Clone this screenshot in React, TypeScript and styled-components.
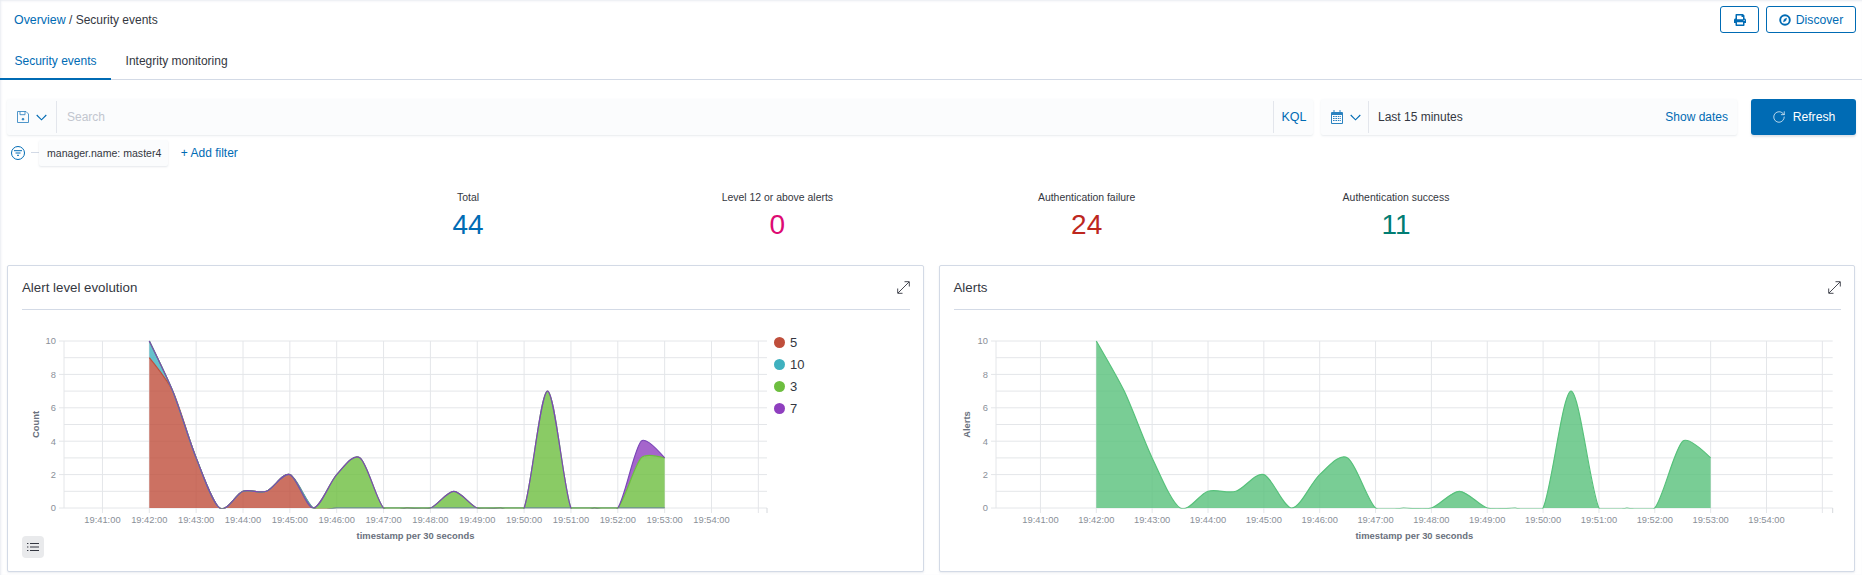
import React from 'react';
import styled, { createGlobalStyle } from 'styled-components';
import { FaPrint } from 'react-icons/fa';
import { RotateCw } from 'lucide-react';

const GlobalStyle = createGlobalStyle`
  html, body {
    margin: 0;
    padding: 0;
    background: #fff;
    font-family: "Liberation Sans", Arial, sans-serif;
    color: #343741;
  }
`;

const Page = styled.div`
  width: 1862px;
  height: 575px;
  overflow: hidden;
  box-sizing: border-box;
  display: flex;
  flex-direction: column;
  box-shadow: inset 1px 1px 2px rgba(211, 218, 230, 0.5);
`;

const TopBar = styled.div`
  height: 40px;
  box-sizing: border-box;
  padding: 6px 6px 0 14px;
  display: flex;
  justify-content: space-between;
  align-items: flex-start;
`;

const Breadcrumb = styled.div`
  font-size: 12px;
  line-height: 14px;
  margin-top: 7px;
  a {
    color: #006bb4;
    font-size: 12.4px;
  }
`;

const ButtonRow = styled.div`
  display: flex;
  gap: 7px;
`;

const OutlineButton = styled.div<{ $width: number }>`
  width: ${(p) => p.$width}px;
  height: 27px;
  box-sizing: border-box;
  border: 1px solid #006bb4;
  border-radius: 3px;
  color: #006bb4;
  font-size: 12.2px;
  display: flex;
  align-items: center;
  justify-content: center;
  gap: 5px;
`;

const Tabs = styled.div`
  height: 40px;
  box-sizing: border-box;
  display: flex;
  border-bottom: 1px solid #d3dae6;
`;

const Tab = styled.div<{ $active?: boolean }>`
  height: 40px;
  box-sizing: border-box;
  padding: 0 14.5px;
  font-size: 12px;
  line-height: 42px;
  color: ${(p) => (p.$active ? '#006bb4' : '#343741')};
  border-bottom: 2px solid ${(p) => (p.$active ? '#006bb4' : 'transparent')};
`;

const QueryRow = styled.div`
  margin-top: 19px;
  padding: 0 6px 0 7px;
  height: 36px;
  display: flex;
`;

const Field = styled.div<{ $width: number }>`
  width: ${(p) => p.$width}px;
  height: 36px;
  box-sizing: border-box;
  background: #fbfcfd;
  box-shadow: 0 1px 2px rgba(152, 162, 179, 0.22);
  border-radius: 2px;
  display: flex;
  align-items: center;
  font-size: 12px;

  & + & {
    margin-left: 8px;
  }
`;

const IconSlot = styled.div<{ $width: number; $inset: number }>`
  width: ${(p) => p.$width}px;
  height: 32px;
  flex: none;
  box-sizing: border-box;
  padding-left: ${(p) => p.$inset}px;
  border-right: 1px solid #e3e6ec;
  display: flex;
  align-items: center;
  justify-content: center;
  gap: 7px;
`;

const SearchInput = styled.input`
  flex: 1;
  border: 0;
  outline: 0;
  background: transparent;
  padding: 0 10px;
  font: inherit;
  &::placeholder {
    color: #c2c6cf;
    opacity: 1;
  }
`;

const Kql = styled.div`
  width: 40px;
  height: 32px;
  box-sizing: border-box;
  border-left: 1px solid #e3e6ec;
  color: #006bb4;
  font-size: 12.5px;
  line-height: 32px;
  padding-left: 7.5px;
`;

const RangeText = styled.div`
  flex: 1;
  padding-left: 9px;
`;

const ShowDates = styled.div`
  color: #006bb4;
  padding-right: 9px;
`;

const RefreshButton = styled.div`
  width: 105px;
  height: 36px;
  margin-left: 14px;
  background: #006bb4;
  color: #fff;
  border-radius: 3px;
  box-shadow: 0 2px 2px rgba(152, 162, 179, 0.3);
  font-size: 12.2px;
  display: flex;
  align-items: center;
  justify-content: center;
  gap: 7px;
`;

const FilterRow = styled.div`
  margin-top: 5px;
  padding-left: 11px;
  height: 26px;
  display: flex;
  align-items: center;
`;

const FilterDash = styled.div`
  width: 8px;
  height: 1px;
  margin: 0 0 2px 6px;
  background: #d3dae6;
`;

const FilterPill = styled.div`
  height: 26px;
  box-sizing: border-box;
  padding: 0 7px 0 8px;
  line-height: 26px;
  font-size: 10.55px;
  background: #fbfcfd;
  border-radius: 2px;
  box-shadow: 0 1px 2px rgba(152, 162, 179, 0.25);
`;

const AddFilter = styled.div`
  margin-left: 12.5px;
  color: #006bb4;
  font-size: 12px;
`;

const Stats = styled.div`
  margin-top: 25px;
  padding-left: 4px;
  width: 1860px;
  box-sizing: border-box;
  display: grid;
  grid-template-columns: repeat(6, 1fr);
  height: 74px;
`;

const Stat = styled.div`
  text-align: center;
  &:first-child {
    grid-column-start: 2;
  }
`;

const StatLabel = styled.div`
  font-size: 10.45px;
  line-height: 14px;
`;

const StatValue = styled.div<{ $color: string }>`
  color: ${(p) => p.$color};
  font-size: 28px;
  line-height: 32px;
  margin-top: 4px;
`;

const Panels = styled.div`
  padding: 0 7px;
  display: flex;
  gap: 15px;
`;

const Panel = styled.div`
  position: relative;
  flex: 1;
  height: 307px;
  box-sizing: border-box;
  background: #fff;
  border: 1px solid #d3dae6;
  border-radius: 2px;
  box-shadow: 0 1px 2px rgba(152, 162, 179, 0.2);
`;

const PanelHeader = styled.div`
  height: 44px;
  box-sizing: border-box;
  margin: 0 13px 0 14px;
  border-bottom: 1px solid #d3dae6;
  display: flex;
  justify-content: space-between;
  align-items: center;
  font-size: 13.3px;
`;

const PanelBody = styled.div`
  display: flex;
`;

const ChartSvg = styled.svg`
  flex: none;
`;

const Legend = styled.div`
  padding: 21.5px 0 0 1px;
`;

const LegendItem = styled.div`
  height: 22px;
  display: flex;
  align-items: center;
  gap: 5px;
  font-size: 13px;
`;

const LegendDot = styled.span<{ $color: string }>`
  width: 11px;
  height: 11px;
  flex: none;
  border-radius: 50%;
  background: ${(p) => p.$color};
`;

const LegendToggle = styled.div`
  position: absolute;
  left: 14px;
  bottom: 13px;
  width: 22px;
  height: 22px;
  border-radius: 4px;
  background: #e9eaec;
  display: flex;
  align-items: center;
  justify-content: center;
`;

const TickLabel = styled.text`
  font-size: 9.33px;
  fill: #8a8f98;
`;

const AxisTitle = styled.text`
  font-size: 9.4px;
  font-weight: 700;
  fill: #6a717d;
  text-anchor: middle;
`;

const ChevronIcon = () => (
  <svg width="11" height="7" viewBox="0 0 11 7" fill="none" stroke="#006bb4" strokeWidth="1.1">
    <path d="M.7 1 5.5 5.8 10.3 1" />
  </svg>
);

const SaveIcon = () => (
  <svg width="12" height="12" viewBox="0 0 12 12" fill="none" stroke="#3b8ac4" strokeWidth=".9">
    <path d="M.5.5h8.5l2.5 2.5v8.5H.5z" />
    <path d="M3 .5v3.2h5V.5" />
    <circle cx="6" cy="8.2" r=".9" fill="#006bb4" />
  </svg>
);

const CalendarIcon = () => (
  <svg width="12" height="14" viewBox="0 0 12 14" fill="none" stroke="#2a82c0">
    <path d="M.5 2.5h11v11H.5z" />
    <path d="M.5 4h11" strokeWidth="2" />
    <path d="M3 0v2.5M9 0v2.5" />
    <path d="M2 6.5h8M2 8.5h8M2 10.5h8" strokeWidth="1.2" strokeDasharray="1.6 .8" />
  </svg>
);

const FilterIcon = () => (
  <svg width="14" height="14" viewBox="0 0 14 14" fill="none" stroke="#006bb4">
    <circle cx="7" cy="7" r="6.5" />
    <path d="M3 4.7h8M4.5 7h5M6 9.3h2" />
  </svg>
);

const DiscoverIcon = () => (
  <svg width="12" height="12" viewBox="0 0 12 12" fill="none" stroke="#006bb4">
    <circle cx="6" cy="6" r="4.8" strokeWidth="1.9" />
    <path d="M7.6 4.2 6.7 6.8 4.5 7.8 5.3 5.2z" fill="#006bb4" strokeWidth=".6" />
  </svg>
);

const ExpandIcon = () => (
  <svg width="13" height="13" viewBox="0 0 13 13" fill="none" stroke="#343741" strokeWidth=".9">
    <path d="M1 12 12 1M7.5.7h4.8v4.8M.7 7.5v4.8h4.8" />
  </svg>
);

const ListIcon = () => (
  <svg width="12" height="10" viewBox="0 0 12 10" fill="none" stroke="#343741">
    <path d="M3 1.5h9M3 5h9M3 8.5h9" />
    <path d="M0 1.5h1.4M0 5h1.4M0 8.5h1.4" />
  </svg>
);

type Point = [number, number];

// same interpolation as d3 v3 "cardinal" with its default tension
const cardinalSegments = (pts: Point[]) => {
  const t: Point[] = [];
  for (let i = 1; i < pts.length - 1; i++) {
    t.push([0.15 * (pts[i + 1][0] - pts[i - 1][0]), 0.15 * (pts[i + 1][1] - pts[i - 1][1])]);
  }
  const last = pts.length - 1;
  let d = `Q${pts[1][0] - (t[0][0] * 2) / 3},${pts[1][1] - (t[0][1] * 2) / 3},${pts[1][0]},${pts[1][1]}`;
  for (let i = 1; i < last - 1; i++) {
    d += `C${pts[i][0] + t[i - 1][0]},${pts[i][1] + t[i - 1][1]},${pts[i + 1][0] - t[i][0]},${pts[i + 1][1] - t[i][1]},${pts[i + 1][0]},${pts[i + 1][1]}`;
  }
  const tl = t[t.length - 1];
  d += `Q${pts[last - 1][0] + (tl[0] * 2) / 3},${pts[last - 1][1] + (tl[1] * 2) / 3},${pts[last][0]},${pts[last][1]}`;
  return d;
};

const Y_TOP = 341;
const Y_ZERO = 508;
const MINUTES = ['41', '42', '43', '44', '45', '46', '47', '48', '49', '50', '51', '52', '53', '54'];

interface Series {
  color: string;
  stroke?: string;
  values: number[];
}

interface ChartProps {
  id: string;
  originX: number;
  width: number;
  axisLeft: number;
  axisRight: number;
  tick42: number;
  minuteStep: number;
  yTitle: string;
  yTitleX: number;
  series: Series[];
  flatLines?: [number, number][];
}

const Chart = ({ id, originX, width, axisLeft, axisRight, tick42, minuteStep, yTitle, yTitleX, series, flatLines = [] }: ChartProps) => {
  const toX = (i: number) => tick42 + (i * minuteStep) / 2;
  const toY = (v: number) => Y_ZERO - (v * (Y_ZERO - Y_TOP)) / 10;
  const stacked: number[] = new Array(series[0].values.length).fill(0);
  const layers = series.map((s) => {
    const bottom = stacked.map((v, i): Point => [toX(i), toY(v)]);
    s.values.forEach((v, i) => {
      stacked[i] += v;
    });
    const top = stacked.map((v, i): Point => [toX(i), toY(v)]);
    const rev = [...bottom].reverse();
    const line = `M${top[0][0]},${top[0][1]}${cardinalSegments(top)}`;
    const area = `${line}L${rev[0][0]},${rev[0][1]}${cardinalSegments(rev)}Z`;
    return { ...s, line, area };
  });
  const gridColor = '#e4e6e9';

  return (
    <ChartSvg width={width} height={261} viewBox={`${originX} 310 ${width} 261`}>
      <defs>
        <clipPath id={id}>
          <rect x={axisLeft} y={Y_TOP - 1} width={axisRight - axisLeft} height={Y_ZERO - Y_TOP + 1.6} />
        </clipPath>
      </defs>
      {[0, 1, 2, 3, 4, 5, 6, 7, 8, 9, 10].map((v) => (
        <line key={v} x1={v % 2 ? axisLeft : axisLeft - 5} x2={axisRight} y1={toY(v)} y2={toY(v)} stroke={gridColor} />
      ))}
      {[...MINUTES, '55'].map((m) => {
        const x = tick42 + (Number(m) - 42) * minuteStep;
        return <line key={m} x1={x} x2={x} y1={Y_TOP} y2={Y_ZERO + 5} stroke={gridColor} />;
      })}
      <line x1={axisLeft} x2={axisLeft} y1={Y_TOP} y2={Y_ZERO} stroke={gridColor} />
      <line x1={axisRight} x2={axisRight} y1={Y_ZERO} y2={Y_ZERO + 5} stroke="#d5d8dc" />
      <g clipPath={`url(#${id})`}>
        {layers.map((l) => (
          <path key={l.color} d={l.area} fill={l.color} fillOpacity={0.8} />
        ))}
        {layers.map((l) => (
          <path key={l.color} d={l.line} fill="none" stroke={l.stroke ?? l.color} strokeWidth={1.2} />
        ))}
        {flatLines.map(([a, b]) => (
          <line key={a} x1={toX(a)} x2={toX(b)} y1={Y_ZERO} y2={Y_ZERO} stroke="#6dbe3f" strokeWidth={1.2} />
        ))}
      </g>
      {[0, 2, 4, 6, 8, 10].map((v) => (
        <TickLabel key={v} x={axisLeft - 8} y={toY(v) + 3.3} textAnchor="end">
          {v}
        </TickLabel>
      ))}
      {MINUTES.map((m) => (
        <TickLabel key={m} x={tick42 + (Number(m) - 42) * minuteStep} y={523} textAnchor="middle">
          {`19:${m}:00`}
        </TickLabel>
      ))}
      <AxisTitle x={(axisLeft + axisRight) / 2} y={539}>
        timestamp per 30 seconds
      </AxisTitle>
      <AxisTitle x={yTitleX} y={424.5} transform={`rotate(-90 ${yTitleX} 424.5)`}>
        {yTitle}
      </AxisTitle>
    </ChartSvg>
  );
};

const zeros = (from: [number, number][]) => {
  const v = new Array(23).fill(0);
  from.forEach(([i, n]) => {
    v[i] = n;
  });
  return v;
};

const levelSeries: Series[] = [
  { color: '#bf4e3b', values: zeros([[0, 9], [1, 7], [2, 3], [4, 1], [5, 1], [6, 2]]) },
  { color: '#3fb1bf', values: zeros([[0, 1]]) },
  { color: '#6dbe3f', values: zeros([[8, 2], [9, 3], [13, 1], [17, 7], [21, 3], [22, 3]]) },
  { color: '#8f3fbf', stroke: '#7b47b8', values: zeros([[21, 1]]) },
];

const alertSeries: Series[] = [
  { color: '#57c17b', values: [10, 7, 3, 0, 1, 1, 2, 0, 2, 3, 0, 0, 0, 1, 0, 0, 0, 7, 0, 0, 0, 4, 3] },
];

const legend = [
  { label: '5', color: '#bf4e3b' },
  { label: '10', color: '#3fb1bf' },
  { label: '3', color: '#6dbe3f' },
  { label: '7', color: '#8f3fbf' },
];

const stats = [
  { label: 'Total', value: '44', color: '#006bb4' },
  { label: 'Level 12 or above alerts', value: '0', color: '#dd0a73' },
  { label: 'Authentication failure', value: '24', color: '#bd271e' },
  { label: 'Authentication success', value: '11', color: '#017d73' },
];

const App: React.FC = () => (
  <Page>
    <GlobalStyle />
    <TopBar>
      <Breadcrumb>
        <a>Overview</a> / Security events
      </Breadcrumb>
      <ButtonRow>
        <OutlineButton $width={39}>
          <FaPrint size={12} />
        </OutlineButton>
        <OutlineButton $width={90}>
          <DiscoverIcon />
          Discover
        </OutlineButton>
      </ButtonRow>
    </TopBar>
    <Tabs>
      <Tab $active>Security events</Tab>
      <Tab>Integrity monitoring</Tab>
    </Tabs>
    <QueryRow>
      <Field $width={1306}>
        <IconSlot $width={50} $inset={0}>
          <SaveIcon />
          <ChevronIcon />
        </IconSlot>
        <SearchInput placeholder="Search" readOnly />
        <Kql>KQL</Kql>
      </Field>
      <Field $width={416}>
        <IconSlot $width={48} $inset={2}>
          <CalendarIcon />
          <ChevronIcon />
        </IconSlot>
        <RangeText>Last 15 minutes</RangeText>
        <ShowDates>Show dates</ShowDates>
      </Field>
      <RefreshButton>
        <RotateCw size={14} strokeWidth={1.2} />
        Refresh
      </RefreshButton>
    </QueryRow>
    <FilterRow>
      <FilterIcon />
      <FilterDash />
      <FilterPill>manager.name: master4</FilterPill>
      <AddFilter>+ Add filter</AddFilter>
    </FilterRow>
    <Stats>
      {stats.map((s) => (
        <Stat key={s.label}>
          <StatLabel>{s.label}</StatLabel>
          <StatValue $color={s.color}>{s.value}</StatValue>
        </Stat>
      ))}
    </Stats>
    <Panels>
      <Panel>
        <PanelHeader>
          Alert level evolution
          <ExpandIcon />
        </PanelHeader>
        <PanelBody>
          <Chart
            id="levels"
            originX={8}
            width={765}
            axisLeft={64}
            axisRight={767}
            tick42={149.3}
            minuteStep={46.85}
            yTitle="Count"
            yTitleX={39}
            series={levelSeries}
            flatLines={[[10, 12], [14, 16], [18, 20]]}
          />
          <Legend>
            {legend.map((l) => (
              <LegendItem key={l.label}>
                <LegendDot $color={l.color} />
                {l.label}
              </LegendItem>
            ))}
          </Legend>
        </PanelBody>
        <LegendToggle>
          <ListIcon />
        </LegendToggle>
      </Panel>
      <Panel>
        <PanelHeader>
          Alerts
          <ExpandIcon />
        </PanelHeader>
        <PanelBody>
          <Chart
            id="alerts"
            originX={940}
            width={914}
            axisLeft={996}
            axisRight={1832.7}
            tick42={1096.3}
            minuteStep={55.85}
            yTitle="Alerts"
            yTitleX={970}
            series={alertSeries}
          />
        </PanelBody>
      </Panel>
    </Panels>
  </Page>
);

export default App;
